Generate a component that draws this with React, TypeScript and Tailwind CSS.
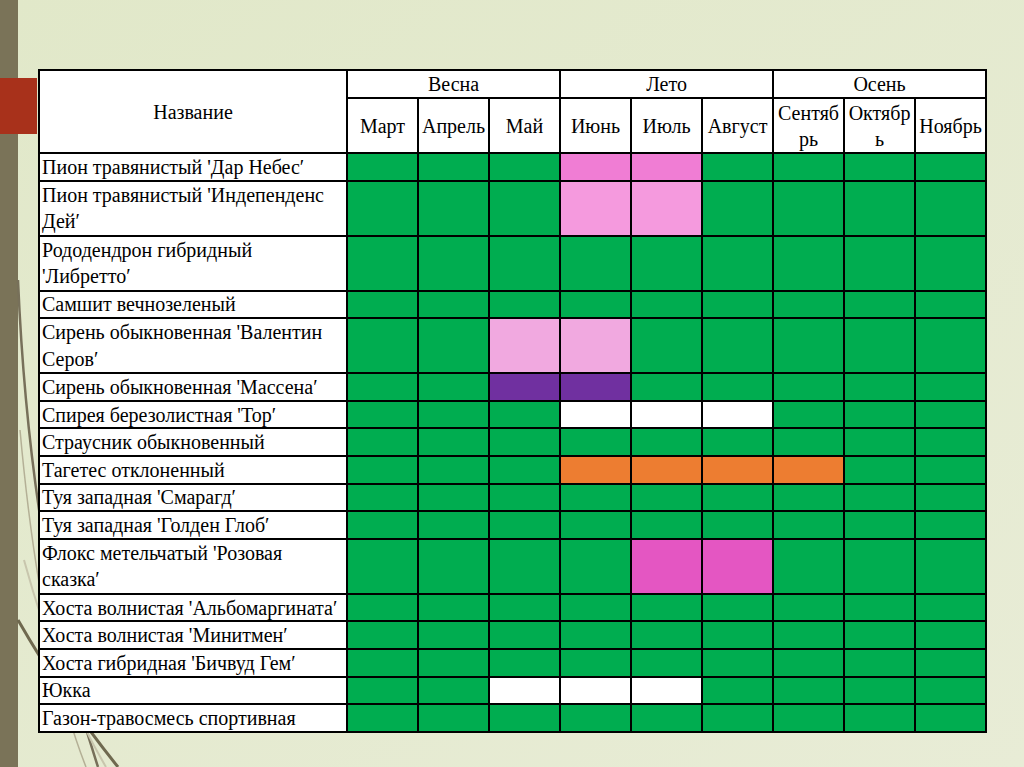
import React from 'react';

type C = 'G' | 'P1' | 'P2' | 'L' | 'V' | 'W' | 'O' | 'M';

const colors: Record<C, string> = {
  G: 'bg-[#00ad50]',
  P1: 'bg-[#f07dd4]',
  P2: 'bg-[#f59ade]',
  L: 'bg-[#f1a9e0]',
  V: 'bg-[#7030a0]',
  W: 'bg-white',
  O: 'bg-[#ed7d31]',
  M: 'bg-[#e456c2]',
};

const rows: { name: string[]; cells: C[] }[] = [
  { name: ["Пион травянистый 'Дар Небес′"], cells: ['G', 'G', 'G', 'P1', 'P1', 'G', 'G', 'G', 'G'] },
  { name: ["Пион травянистый 'Индепенденс", 'Дей′'], cells: ['G', 'G', 'G', 'P2', 'P2', 'G', 'G', 'G', 'G'] },
  { name: ['Рододендрон гибридный', "'Либретто′"], cells: ['G', 'G', 'G', 'G', 'G', 'G', 'G', 'G', 'G'] },
  { name: ['Самшит вечнозеленый'], cells: ['G', 'G', 'G', 'G', 'G', 'G', 'G', 'G', 'G'] },
  { name: ["Сирень обыкновенная 'Валентин", 'Серов′'], cells: ['G', 'G', 'L', 'L', 'G', 'G', 'G', 'G', 'G'] },
  { name: ["Сирень обыкновенная 'Массена′"], cells: ['G', 'G', 'V', 'V', 'G', 'G', 'G', 'G', 'G'] },
  { name: ["Спирея березолистная 'Тор′"], cells: ['G', 'G', 'G', 'W', 'W', 'W', 'G', 'G', 'G'] },
  { name: ['Страусник обыкновенный'], cells: ['G', 'G', 'G', 'G', 'G', 'G', 'G', 'G', 'G'] },
  { name: ['Тагетес отклоненный'], cells: ['G', 'G', 'G', 'O', 'O', 'O', 'O', 'G', 'G'] },
  { name: ["Туя западная 'Смарагд′"], cells: ['G', 'G', 'G', 'G', 'G', 'G', 'G', 'G', 'G'] },
  { name: ["Туя западная 'Голден Глоб′"], cells: ['G', 'G', 'G', 'G', 'G', 'G', 'G', 'G', 'G'] },
  { name: ["Флокс метельчатый 'Розовая", 'сказка′'], cells: ['G', 'G', 'G', 'G', 'M', 'M', 'G', 'G', 'G'] },
  { name: ["Хоста волнистая 'Альбомаргината′"], cells: ['G', 'G', 'G', 'G', 'G', 'G', 'G', 'G', 'G'] },
  { name: ["Хоста волнистая 'Минитмен′"], cells: ['G', 'G', 'G', 'G', 'G', 'G', 'G', 'G', 'G'] },
  { name: ["Хоста гибридная 'Бичвуд Гем′"], cells: ['G', 'G', 'G', 'G', 'G', 'G', 'G', 'G', 'G'] },
  { name: ['Юкка'], cells: ['G', 'G', 'W', 'W', 'W', 'G', 'G', 'G', 'G'] },
  { name: ['Газон-травосмесь спортивная'], cells: ['G', 'G', 'G', 'G', 'G', 'G', 'G', 'G', 'G'] },
];

const months = ['Март', 'Апрель', 'Май', 'Июнь', 'Июль', 'Август'];

export default function App() {
  return (
    <div className="relative w-[1024px] h-[767px] overflow-hidden bg-gradient-to-br from-[#e1e8c9] to-[#e8ecd6] flex text-black [font-family:'Liberation_Serif',serif]">
      {/* slide decoration */}
      <svg className="absolute left-0 top-0" width="140" height="767" viewBox="0 0 140 767">
        <path d="M18 280 Q 30 560 98 767" stroke="#77705a" strokeWidth="2.5" fill="none" />
        <path d="M20 430 Q 40 650 86 767" stroke="#b4b096" strokeWidth="1.5" fill="none" />
        <path d="M18 620 Q 64 700 118 767" stroke="#6f694f" strokeWidth="3" fill="none" />
        <path d="M24 560 Q 60 690 106 767" stroke="#c8c6ad" strokeWidth="2" fill="none" />
      </svg>
      <div className="w-[18px] h-full bg-[#7a7358] shrink-0" />
      <div className="absolute left-0 top-[78px] w-[37px] h-[56px] bg-[#a8311b]" />

      <div className="relative pl-[20px] pt-[69px]">
        <table className="table-fixed w-[948px] border-collapse border-2 border-black text-[20px] leading-[24px]">
          <colgroup>
            <col className="w-[308px]" />
            {Array.from({ length: 9 }).map((_, i) => (
              <col key={i} className="w-[71px]" />
            ))}
          </colgroup>
          <thead>
            <tr className="h-[28px]">
              <th rowSpan={2} className="bg-white border-2 border-black font-normal text-center align-middle p-0">
                Название
              </th>
              <th colSpan={3} className="bg-white border-2 border-black font-normal text-center p-0">
                Весна
              </th>
              <th colSpan={3} className="bg-white border-2 border-black font-normal text-center p-0">
                Лето
              </th>
              <th colSpan={3} className="bg-white border-2 border-black font-normal text-center p-0">
                Осень
              </th>
            </tr>
            <tr className="h-[55px]">
              {months.map((m) => (
                <th key={m} className="bg-white border-2 border-black font-normal text-center align-middle p-0 whitespace-nowrap">
                  {m}
                </th>
              ))}
              <th className="bg-white border-2 border-black font-normal text-center align-middle p-0 leading-[26px] whitespace-nowrap">
                Сентяб
                <br />
                рь
              </th>
              <th className="bg-white border-2 border-black font-normal text-center align-middle p-0 leading-[26px] whitespace-nowrap">
                Октябр
                <br />
                ь
              </th>
              <th className="bg-white border-2 border-black font-normal text-center align-middle p-0 whitespace-nowrap">
                Ноябрь
              </th>
            </tr>
          </thead>
          <tbody>
            {rows.map((r, i) => {
              const two = r.name.length > 1;
              return (
                <tr key={i} className={two ? 'h-[55px]' : 'h-[27.6px]'}>
                  <td
                    className={`bg-white border-2 border-black pl-[2px] py-0 whitespace-nowrap align-middle ${
                      two ? 'leading-[26.5px]' : 'leading-[24px]'
                    }`}
                  >
                    {r.name.map((line, j) => (
                      <div key={j}>{line}</div>
                    ))}
                  </td>
                  {r.cells.map((c, j) => (
                    <td key={j} className={`${colors[c]} border-2 border-black p-0`} />
                  ))}
                </tr>
              );
            })}
          </tbody>
        </table>
      </div>
    </div>
  );
}
